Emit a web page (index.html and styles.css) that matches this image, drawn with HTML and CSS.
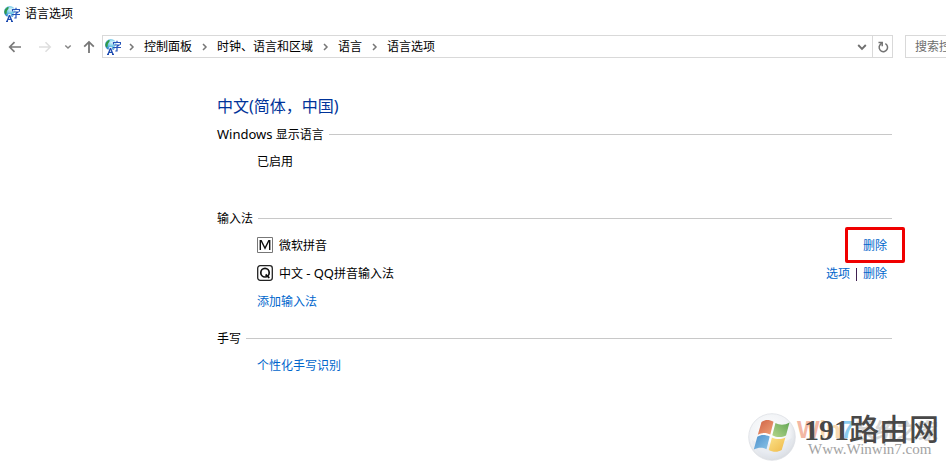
FILE: index.html
```html
<!DOCTYPE html>
<html lang="zh-CN">
<head>
  <meta charset="UTF-8">
  <meta name="viewport" content="width=device-width, initial-scale=1.0">
  <title>语言选项</title>
  <link rel="stylesheet" href="styles.css">
</head>
<body>
  <svg class="defs" width="0" height="0" aria-hidden="true">
    <defs>
      <radialGradient id="globe" cx="0.55" cy="0.3" r="0.7">
        <stop offset="0" stop-color="#d8f6fa"/>
        <stop offset="0.5" stop-color="#6cc4e6"/>
        <stop offset="1" stop-color="#1f74c4"/>
      </radialGradient>
      <symbol id="language-icon" viewBox="0 0 16 16">
        <circle cx="5.800" cy="5.800" r="5.700" fill="url(#globe)"/>
        <path d="M1 3.500 3.500 1l1.500.4L3.800 3.500 2.800 5 2.600 7.500 1.200 8.400.3 6z" fill="#2f9a48"/>
        <path d="M5.500 8.500 2.700 16M5.500 8.500 8.300 16" fill="none" stroke="#fff" stroke-width="2.400"/>
        <path d="M5.500 9 3 15.500M5.500 9 8 15.500M3.900 13.400h3.200M2 15.500h2M7 15.500h2" fill="none" stroke="#1d4bb0" stroke-width="1.300"/>
        <path d="M8.500 5.500V3.500h7M12 2v1.500M10 6.500h4L12 8v3.500M8.400 8.500h7.300" fill="none" stroke="#fff" stroke-width="2"/>
        <path d="M8.500 5.500V3.500h7v2M12 1.800v1.700M9.800 6h4.200L12 7.500v4.500h-1.700M8 8.500h8" fill="none" stroke="#2453b8" stroke-width="1.200"/>
      </symbol>
      <symbol id="chevron-right" viewBox="0 0 8 8">
        <path d="M2.500 1 5.500 4l-3 3" fill="none" stroke="#777" stroke-width="1.500"/>
      </symbol>
    </defs>
  </svg>

  <header class="titlebar">
    <svg class="app-icon"><use href="#language-icon"/></svg>
    <span>语言选项</span>
  </header>

  <div class="toolbar">
    <div class="nav-buttons">
      <button type="button" class="nav-back" aria-label="后退">
        <svg width="14" height="12" viewBox="0 0 14 12"><path d="M13 6H2M6.500 1.200 1.700 6l4.800 4.800" fill="none" stroke="#7a7a7a" stroke-width="1.700"/></svg>
      </button>
      <button type="button" class="nav-forward" aria-label="前进" disabled>
        <svg width="14" height="12" viewBox="0 0 14 12"><path d="M1 6h11M7.500 1.200 12.300 6l-4.800 4.800" fill="none" stroke="#dedede" stroke-width="1.500"/></svg>
      </button>
      <button type="button" class="nav-recent" aria-label="最近浏览的位置">
        <svg width="8" height="6" viewBox="0 0 8 6"><path d="M1.300 1.500 4 4l2.700-2.500" fill="none" stroke="#858585" stroke-width="1.500"/></svg>
      </button>
      <button type="button" class="nav-up" aria-label="上移">
        <svg width="12" height="14" viewBox="0 0 12 14"><path d="M6 13V2M1.200 6.700 6 1.900l4.800 4.800" fill="none" stroke="#777" stroke-width="1.800"/></svg>
      </button>
    </div>
    <div class="address">
      <svg class="app-icon"><use href="#language-icon"/></svg>
      <nav class="crumbs">
        <svg class="chevron"><use href="#chevron-right"/></svg>
        <a href="#">控制面板</a>
        <svg class="chevron"><use href="#chevron-right"/></svg>
        <a href="#">时钟、语言和区域</a>
        <svg class="chevron"><use href="#chevron-right"/></svg>
        <a href="#">语言</a>
        <svg class="chevron"><use href="#chevron-right"/></svg>
        <a href="#">语言选项</a>
      </nav>
      <button type="button" class="address-drop" aria-label="以前的位置">
        <svg width="10" height="8" viewBox="0 0 10 8"><path d="M1.200 2 5 5.800 8.800 2" fill="none" stroke="#707070" stroke-width="1.900"/></svg>
      </button>
      <button type="button" class="address-refresh" aria-label="刷新">
        <svg width="12" height="12" viewBox="0 0 12 12"><path d="M8.300 2.700A4.200 4.200 0 1 1 2.800 4.200L4.600 2" fill="none" stroke="#737373" stroke-width="1.500"/><path d="M1.500 1.500h3.700v3.700" fill="none" stroke="#737373" stroke-width="1.500"/></svg>
      </button>
    </div>
    <input type="text" class="search" placeholder="搜索控制面板" aria-label="搜索控制面板">
  </div>

  <main class="content">
    <h1>中文(简体，中国)</h1>

    <section>
      <h2><span><span class="latin">Windows</span> 显示语言</span></h2>
      <div class="row">已启用</div>
    </section>

    <section class="input-methods">
      <h2>输入法</h2>
      <div class="row">
        <svg class="ime-icon" viewBox="0 0 16 16"><path d="M.5.5h15v15H.5z" fill="#fff" stroke="#777"/><path d="M3.300 13V3.800h.9L8 11.300l3.800-7.500h.9V13" fill="none" stroke="#111" stroke-width="1.400"/></svg>
        <span>微软拼音</span>
        <div class="actions">
          <a href="#" class="marked">删除</a>
        </div>
      </div>
      <div class="row">
        <svg class="ime-icon" viewBox="0 0 16 16"><rect x=".7" y=".7" width="14.600" height="14.600" rx="2.500" fill="#fff" stroke="#222" stroke-width="1.300"/><ellipse cx="8" cy="7.700" rx="4.200" ry="4.300" fill="none" stroke="#111" stroke-width="1.700"/><path d="m8.600 9.500 3.700 3.400" stroke="#111" stroke-width="1.700"/></svg>
        <span>中文 <span class="latin">- QQ</span>拼音输入法</span>
        <div class="actions">
          <a href="#">选项</a>
          <span class="separator"></span>
          <a href="#">删除</a>
        </div>
      </div>
      <div class="row"><a href="#">添加输入法</a></div>
    </section>

    <section>
      <h2>手写</h2>
      <div class="row"><a href="#">个性化手写识别</a></div>
    </section>
  </main>

  <div class="watermark">
    <svg class="orb" viewBox="0 0 48 48">
      <defs>
        <radialGradient id="orb-fill" cx="0.45" cy="0.4" r="0.62">
          <stop offset="0" stop-color="#ffffff"/>
          <stop offset="0.7" stop-color="#f1f3f6"/>
          <stop offset="1" stop-color="#d6dae0"/>
        </radialGradient>
        <linearGradient id="flag-red" x1="0" y1="0" x2="1" y2="1"><stop offset="0" stop-color="#cf6244"/><stop offset="1" stop-color="#f0a279"/></linearGradient>
        <linearGradient id="flag-green" x1="0" y1="1" x2="1" y2="0"><stop offset="0" stop-color="#b4d58a"/><stop offset="1" stop-color="#62a655"/></linearGradient>
        <linearGradient id="flag-blue" x1="0" y1="0" x2="1" y2="1"><stop offset="0" stop-color="#4b8fcb"/><stop offset="1" stop-color="#8cc5e8"/></linearGradient>
        <linearGradient id="flag-yellow" x1="0" y1="0" x2="1" y2="1"><stop offset="0" stop-color="#fbe28a"/><stop offset="1" stop-color="#efb948"/></linearGradient>
      </defs>
      <circle cx="24" cy="24" r="23.300" fill="url(#orb-fill)" stroke="#dde0e5" stroke-width=".8"/>
      <path d="M4 27c9 5 29 5 40-2-1 11-10 20-20 20S5 37 4 27z" fill="#dce2ea" opacity=".4"/>
      <path d="M13.500 9c4-2.800 8-2.300 12-.2L22.300 21.500c-4-2-8-2.200-12.500.2z" fill="url(#flag-red)"/>
      <path d="M27.500 10c4.500 2.300 9 2.300 14-.5L38 22.500c-4.500 2.300-9.500 2-13.700-.3z" fill="url(#flag-green)"/>
      <path d="M9.300 23.800c4-2.500 8-2.200 12.400-.3l-3.200 12.700c-4-2-8-2-12.700.3z" fill="url(#flag-blue)"/>
      <path d="M23.900 24.500c4.500 2 8.800 2.200 13.500 0l-3.700 12.500c-4 2.500-8.800 2.300-13 0z" fill="url(#flag-yellow)"/>
    </svg>
    <div class="mark-text">
      <div class="mark-back"><span class="win"><span class="w">W</span><span class="n">in</span><span class="seven">7</span></span>系统之家</div>
      <div class="mark-front"><span class="digits">191</span>路由网</div>
      <div class="mark-url">Www.Winwin7.com</div>
    </div>
  </div>
</body>
</html>
```
FILE: styles.css
```css
* {
  box-sizing: border-box;
}

body {
  margin: 0;
  min-height: 100vh;
  position: relative;
  overflow: hidden;
  background: #fff;
  color: #000;
  font-family: "Noto Sans", "Noto Sans CJK SC", sans-serif;
  font-size: 12px;
  line-height: 20px;
}

.defs {
  position: absolute;
}

a {
  color: #0066cc;
  text-decoration: none;
}

button {
  display: flex;
  align-items: center;
  justify-content: center;
  padding: 0;
  border: 0;
  background: none;
}

.latin {
  font-size: 13px;
  line-height: 1;
}

.app-icon {
  flex: none;
  width: 16px;
  height: 16px;
}

.titlebar {
  display: flex;
  align-items: center;
  gap: 5px;
  height: 28px;
  padding-left: 4px;
}

/* toolbar */
.toolbar {
  display: flex;
  height: 23px;
  margin-top: 7px;
}

.nav-buttons {
  display: flex;
  width: 102px;
  padding-left: 8px;
}

.nav-back {
  width: 14px;
}

.nav-forward {
  width: 14px;
  margin-left: 16px;
}

.nav-recent {
  width: 8px;
  margin-left: 12px;
}

.nav-up {
  width: 12px;
  margin-left: 11px;
}

.address {
  display: flex;
  flex: 1;
  align-items: center;
  margin-right: 12px;
  padding-left: 2px;
  border: 1px solid #d9d9d9;
}

.crumbs {
  display: flex;
  flex: 1;
  align-items: center;
  gap: 8px;
  padding-left: 6px;
}

.crumbs a {
  color: #000;
}

.chevron {
  width: 9px;
  height: 8px;
}

.address-drop {
  width: 20px;
  height: 21px;
}

.address-refresh {
  width: 20px;
  height: 21px;
  border-left: 1px solid #d9d9d9;
}

.search {
  width: 41px;
  padding: 0 0 0 9px;
  border: 1px solid #d9d9d9;
  border-right: 0;
  border-radius: 0;
  font: inherit;
}

.search::placeholder {
  color: #6d6d6d;
}

/* page */
.content {
  padding: 36px 54px 0 217px;
}

h1 {
  margin: 0 0 7px;
  color: #003399;
  font-size: 16px;
  font-weight: normal;
  line-height: 24px;
}

section {
  margin-bottom: 13px;
}

section:first-of-type {
  margin-bottom: 33px;
}

h2 {
  display: flex;
  align-items: center;
  gap: 5px;
  margin: 0 0 3px;
  font-size: 12px;
  font-weight: normal;
}

h2::after {
  content: "";
  flex: 1;
  height: 1px;
  margin-bottom: 2px;
  background: #c8c8c8;
}

.row {
  display: flex;
  align-items: center;
  height: 28px;
  padding: 0 5px 0 40px;
}

.ime-icon {
  width: 16px;
  height: 16px;
  margin: 0 6px 2px 0;
}

.actions {
  display: flex;
  align-items: center;
  gap: 6px;
  margin-left: auto;
}

.separator {
  width: 1px;
  height: 13px;
  background: #402050;
}

.marked {
  position: relative;
}

/* red frame around the link */
.marked::after {
  content: "";
  position: absolute;
  inset: -9px -18px -7px;
  border: 3px solid #f00000;
  border-radius: 2px;
}

/* site logo in the corner */
.watermark {
  position: absolute;
  right: 0;
  bottom: 1px;
  display: flex;
  width: 198px;
  height: 48px;
}

.orb {
  width: 48px;
  height: 48px;
}

.mark-text {
  position: relative;
  flex: 1;
  white-space: nowrap;
}

.mark-back,
.mark-front,
.mark-url {
  position: absolute;
}

.mark-back {
  left: 1px;
  top: 0;
  color: #d6d6d6;
  font: bold 21px/32px "Noto Sans CJK SC", sans-serif;
}

.mark-back .win {
  font-family: "Liberation Sans", sans-serif;
  font-size: 24px;
}

.mark-back .w {
  color: #f3b7a4;
}

.mark-back .n {
  color: #f8d9b0;
}

.mark-back .seven {
  color: #8ccbee;
}

.mark-front {
  left: 8px;
  top: -2px;
  color: #484848;
  font: 500 30px/32px "Noto Sans CJK SC", sans-serif;
}

.mark-front .digits {
  font-family: "Liberation Serif", serif;
  font-weight: bold;
  font-size: 30px;
}

.mark-url {
  left: 12px;
  top: 26px;
  color: #a3a3a3;
  font: 15px/20px "Liberation Serif", serif;
}
```
